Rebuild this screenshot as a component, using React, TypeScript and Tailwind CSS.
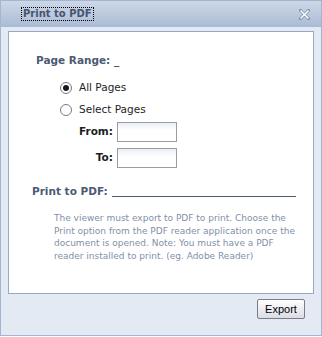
import React from "react";

export default function App() {
  const font = { fontFamily: '"DejaVu Sans", Verdana, sans-serif' };
  return (
    <div className="w-[322px] h-[337px] bg-white" style={font}>
      <div className="w-[322px] h-[336px] border border-[#a3b5d0] bg-[#e4eaf3] flex flex-col">
        <div className="h-[26px] shrink-0 bg-gradient-to-b from-[#cdd8e7] to-[#a9bbd4] flex items-center justify-between pl-[21px] pr-[11px]">
          <span className="text-[10px] font-bold text-[#46546f] leading-[12px] px-[1px] outline-1 outline-dotted outline-black">
            Print to PDF
          </span>
          <svg width="11" height="11" viewBox="0 0 11 11">
            <path d="M1.5 1.5L9.5 9.5M9.5 1.5L1.5 9.5" stroke="#7d8ca6" strokeWidth="3" strokeLinecap="square" />
            <path d="M1.5 1.5L9.5 9.5M9.5 1.5L1.5 9.5" stroke="#ffffff" strokeWidth="1.6" />
          </svg>
        </div>
        <div className="pt-[4px] px-[7px]">
          <div className="h-[263px] bg-white border border-[#97a9c6] pl-[27px] pt-[22px]">
            <div className="text-[10.5px] font-bold text-[#4d5a74] leading-[13px]">Page Range: _</div>
            <div className="pl-[24px] pt-[14px] flex flex-col gap-[9px]">
              <label className="flex items-center gap-[7px] text-[10.5px] text-[#1e1e1e] leading-[13px]">
                <span className="w-[12px] h-[12px] rounded-full border border-[#7a7a7a] bg-white flex items-center justify-center">
                  <span className="w-[6px] h-[6px] rounded-full bg-[#1a1a1a]" />
                </span>
                All Pages
              </label>
              <label className="flex items-center gap-[7px] text-[10.5px] text-[#1e1e1e] leading-[13px]">
                <span className="w-[12px] h-[12px] rounded-full border border-[#7a7a7a] bg-white" />
                Select Pages
              </label>
            </div>
            <div className="pt-[6px] flex flex-col gap-[6px]">
              <div className="flex items-center">
                <span className="w-[77px] text-right text-[10.5px] font-bold text-[#1e1e1e]">From:</span>
                <span className="ml-[4px] w-[60px] h-[20px] border border-[#9c9c9c] bg-gradient-to-b from-[#e9eef6] to-white to-[40%]" />
              </div>
              <div className="flex items-center">
                <span className="w-[77px] text-right text-[10.5px] font-bold text-[#1e1e1e]">To:</span>
                <span className="ml-[4px] w-[60px] h-[20px] border border-[#9c9c9c] bg-gradient-to-b from-[#e9eef6] to-white to-[40%]" />
              </div>
            </div>
            <div className="pt-[17px] -ml-[4px] flex items-end">
              <span className="text-[10.5px] font-bold text-[#4d5a74] leading-[13px]">Print to PDF:</span>
              <span className="ml-[4px] w-[184px] h-[1px] mb-[1px] bg-[#4d5a74]" />
            </div>
            <div className="pt-[14px] pl-[18px] text-[9px] leading-[12.5px] text-[#8190a8]">
              The viewer must export to PDF to print. Choose the
              <br />
              Print option from the PDF reader application once the
              <br />
              document is opened. Note: You must have a PDF
              <br />
              reader installed to print. (eg. Adobe Reader)
            </div>
          </div>
        </div>
        <div className="flex justify-end pr-[16px] pt-[5px]">
          <button className="w-[48px] h-[20px] border border-[#7c7c88] rounded-[2px] bg-gradient-to-b from-white to-[#dcdce4] text-[11px] text-black leading-none" style={{ fontFamily: '"Liberation Sans", Arial, sans-serif' }}>
            Export
          </button>
        </div>
      </div>
    </div>
  );
}
